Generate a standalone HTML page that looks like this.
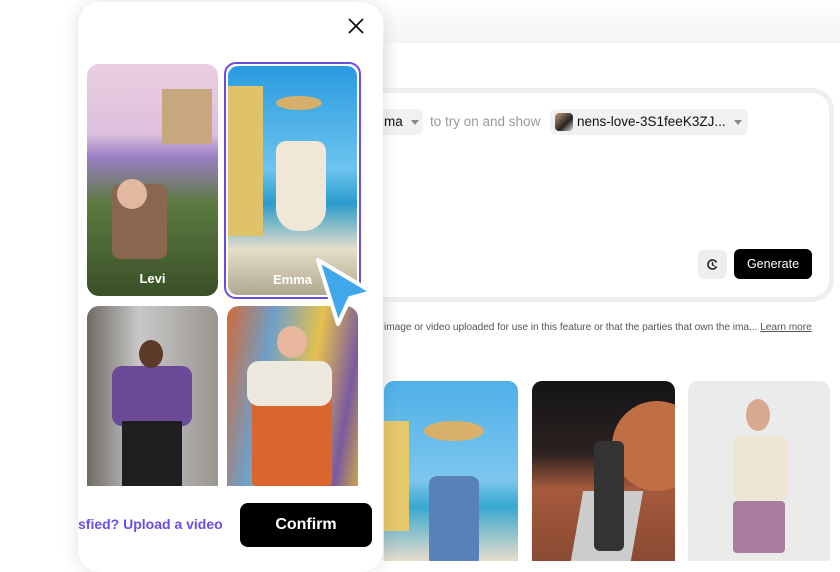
<!DOCTYPE html>
<html><head><meta charset="utf-8"><style>
*{box-sizing:border-box;margin:0;padding:0}
body{width:840px;height:560px;overflow:hidden;background:#fff;font-family:"Liberation Sans",sans-serif;position:relative}
.top{position:absolute;left:384px;top:0;width:456px;height:42px;background:linear-gradient(180deg,#fff,#f4f4f4)}
.app{position:absolute;left:384px;top:42px;width:456px;height:518px;background:#fff;border-top:1px solid #eee}
.shadowL{position:absolute;left:370px;top:42px;width:30px;height:518px;background:linear-gradient(90deg,#ececec,#fff)}
.card{position:absolute;left:360px;top:88px;width:474px;height:214px;background:#fff;border:5px solid #efefef;border-radius:22px}
.pill{position:absolute;top:109px;height:26px;background:#f1f1f1;border-radius:6px;font-size:13.5px;color:#111;line-height:26px}
.tri{display:inline-block;width:0;height:0;border-left:4px solid transparent;border-right:4px solid transparent;border-top:5px solid #888;vertical-align:middle;margin-left:8px}
.gen{position:absolute;left:734px;top:249px;width:78px;height:30px;background:#000;color:#fff;border-radius:6px;font-size:12.5px;text-align:center;line-height:30px}
.hist{position:absolute;left:698px;top:250px;width:29px;height:29px;background:#eee;border-radius:6px}
.disc{position:absolute;left:384px;top:322px;font-size:10.2px;color:#555;white-space:nowrap;letter-spacing:-0.05px}
.disc u{color:#555}
.img{position:absolute;top:381px;height:180px;border-radius:10px 10px 0 0;overflow:hidden}
.modal{position:absolute;left:78px;top:2px;width:305px;height:570px;background:#fff;border-radius:22px;box-shadow:0 0 18px rgba(0,0,0,0.12)}
.t{position:absolute;border-radius:12px;overflow:hidden}
.lbl{position:absolute;bottom:10px;width:100%;text-align:center;color:#fff;font-size:13px;font-weight:bold}
.confirm{position:absolute;left:240px;top:503px;width:132px;height:44px;background:#000;border-radius:8px;color:#fff;font-size:16px;font-weight:bold;text-align:center;line-height:44px}
.up{position:absolute;left:78px;top:516px;color:#6a4de8;font-size:14px;font-weight:bold;white-space:nowrap}
</style></head><body>
<div class="top"></div>
<div class="app"></div>
<div class="shadowL"></div>
<div class="card"></div>
<div class="pill" style="left:366px;width:57px;padding-left:18px">ma<span class="tri"></span></div>
<div style="position:absolute;left:430px;top:114px;font-size:13.5px;color:#999">to try on and show</div>
<div class="pill" style="left:550px;width:198px;padding-left:27px"><span style="position:absolute;left:5px;top:4px;width:18px;height:18px;border-radius:4px;background:linear-gradient(135deg,#c9a07a,#222 60%,#ddd)"></span>nens-love-3S1feeK3ZJ...<span class="tri"></span></div>
<div class="hist"><svg width="29" height="29" viewBox="0 0 29 29"><path d="M18.5 12.5a4.5 4.5 0 1 0 0 4" fill="none" stroke="#222" stroke-width="1.6"/><path d="M14.5 12v3l2 1" fill="none" stroke="#222" stroke-width="1.4"/></svg></div>
<div class="gen">Generate</div>
<div class="disc">image or video uploaded for use in this feature or that the parties that own the ima... <u>Learn more</u></div>
<div class="img" style="left:384px;width:134px;background:linear-gradient(180deg,#4fb0e8 0%,#7cc6ee 55%,#38a9d0 70%,#e8dccb 100%)">
<div style="position:absolute;left:40px;top:40px;width:60px;height:20px;border-radius:50%;background:#d8b06a"></div>
<div style="position:absolute;left:45px;top:95px;width:50px;height:90px;background:#5a80b8;border-radius:8px"></div>
<div style="position:absolute;left:0;top:40px;width:25px;height:110px;background:#e4c86a"></div></div>
<div class="img" style="left:532px;width:143px;background:linear-gradient(180deg,#141416 0%,#2b2220 40%,#a55a3c 60%,#8a4a33 100%)">
<div style="position:absolute;left:80px;top:20px;width:90px;height:90px;border-radius:50%;background:#c06f45"></div>
<div style="position:absolute;left:45px;top:110px;width:60px;height:70px;background:#ccc;transform:skewX(-10deg)"></div>
<div style="position:absolute;left:62px;top:60px;width:30px;height:110px;background:#333;border-radius:6px"></div></div>
<div class="img" style="left:688px;width:142px;background:#ebebeb">
<div style="position:absolute;left:45px;top:55px;width:55px;height:65px;background:#ede6d4;border-radius:8px"></div>
<div style="position:absolute;left:45px;top:120px;width:52px;height:52px;background:#a87d9e;border-radius:4px"></div>
<div style="position:absolute;left:58px;top:18px;width:24px;height:32px;background:#d9a890;border-radius:50%"></div></div>

<div class="modal">
<svg style="position:absolute;left:270px;top:16px" width="16" height="16" viewBox="0 0 16 16"><path d="M1 1L15 15M15 1L1 15" stroke="#111" stroke-width="1.8"/></svg>
<div class="t" style="left:9px;top:62px;width:131px;height:232px;background:linear-gradient(180deg,#e9cfe0 0%,#dcc0dd 30%,#9b7fc4 40%,#5c7a40 60%,#3a5028 100%)">
<div style="position:absolute;left:75px;top:25px;width:50px;height:55px;background:#c7a77d"></div>
<div style="position:absolute;left:25px;top:120px;width:55px;height:75px;background:#8a6850;border-radius:8px"></div>
<div style="position:absolute;left:30px;top:115px;width:30px;height:30px;background:#e2b9a0;border-radius:50%"></div>
<div class="lbl">Levi</div></div>
<div class="t" style="left:146px;top:60px;width:137px;height:237px;border:2px solid #6c4be0;padding:2px;background:#fff"><div style="position:absolute;inset:2px;border-radius:10px;background:linear-gradient(180deg,#2a9be0 0%,#6cc4ee 45%,#2a9ccc 60%,#e6ddc8 80%,#b0a88f 100%)">
<div style="position:absolute;left:0;top:20px;width:35px;height:150px;background:#dfc26a"></div>
<div style="position:absolute;left:48px;top:75px;width:50px;height:90px;background:#f1e7d6;border-radius:10px 10px 22px 22px"></div>
<div style="position:absolute;left:48px;top:30px;width:46px;height:14px;background:#d6b06a;border-radius:50%"></div>
<div class="lbl" style="bottom:8px">Emma</div></div></div>
<div class="t" style="left:9px;top:304px;width:131px;height:180px;border-radius:12px 12px 0 0;background:linear-gradient(90deg,#6f6a63,#c8c8c8 40%,#9a9690)">
<div style="position:absolute;left:25px;top:60px;width:80px;height:60px;background:#6a4996;border-radius:10px"></div>
<div style="position:absolute;left:35px;top:115px;width:60px;height:65px;background:#1f1f22"></div>
<div style="position:absolute;left:52px;top:34px;width:24px;height:28px;background:#5b3a2a;border-radius:50%"></div></div>
<div class="t" style="left:149px;top:304px;width:131px;height:180px;border-radius:12px 12px 0 0;background:linear-gradient(100deg,#d26a3a,#6f9fc8 30%,#e5c14f 60%,#7b5aa0 85%,#c9a64a)">
<div style="position:absolute;left:25px;top:55px;width:80px;height:125px;background:#d9652f;border-radius:14px 14px 4px 4px"></div>
<div style="position:absolute;left:20px;top:55px;width:85px;height:45px;background:#eee9df;border-radius:12px"></div>
<div style="position:absolute;left:50px;top:20px;width:30px;height:32px;background:#e8b69c;border-radius:50%"></div></div>
</div>
<div class="up">sfied? Upload a video</div>
<div class="confirm">Confirm</div>
<svg style="position:absolute;left:306px;top:250px" width="76" height="82" viewBox="0 0 76 82"><path d="M12 10 L66 42 L44 48 L32 74 Z" fill="#3fa7ea" stroke="#fff" stroke-width="4" stroke-linejoin="round"/></svg>
</body></html>
